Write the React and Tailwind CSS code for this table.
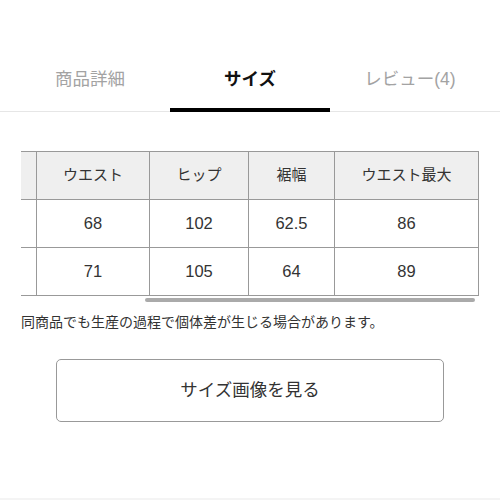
import React from "react";

const font = { fontFamily: '"Liberation Sans", "Noto Sans CJK JP", sans-serif' };

const tabs = ["商品詳細", "サイズ", "レビュー(4)"];
const headers = ["ウエスト", "ヒップ", "裾幅", "ウエスト最大"];
const rows = [
  ["68", "102", "62.5", "86"],
  ["71", "105", "64", "89"],
];
const widths = ["w-[113px]", "w-[99px]", "w-[86px]", "w-[144px]"];

export default function App() {
  const active = 1;

  return (
    <div className="w-[500px] h-[500px] bg-white overflow-hidden text-[#333]" style={font}>
      {/* tabs */}
      <div className="mt-[48px] h-[64px] border-b border-[#e6e6e6] px-[10px] grid grid-cols-3">
        {tabs.map((t, i) => (
          <div key={t} className="relative flex items-center justify-center">
            <span className={`text-[17.5px] ${i === active ? "font-bold text-[#111]" : "text-[#a3a3a3]"}`}>{t}</span>
            {i === active && <div className="absolute left-0 right-0 bottom-[-1px] h-[4px] bg-black" />}
          </div>
        ))}
      </div>

      {/* size table (scrolled horizontally) */}
      <div className="mt-[39px] ml-[21px]">
        <div className="w-[458px] border-t border-r border-[#999]">
          <div className="flex h-[48px] border-b border-[#999] bg-[#efefef]">
            <div className="w-[15px]" />
            {headers.map((h, i) => (
              <div key={h} className={`${widths[i]} border-l border-[#999] flex items-center justify-center text-[15px]`}>
                {h}
              </div>
            ))}
          </div>
          {rows.map((r, ri) => (
            <div key={ri} className="flex h-[48px] border-b border-[#999] bg-white">
              <div className="w-[15px]" />
              {r.map((v, i) => (
                <div key={i} className={`${widths[i]} border-l border-[#999] flex items-center justify-center text-[16.5px]`}>
                  {v}
                </div>
              ))}
            </div>
          ))}
        </div>
        <div className="mt-[2px] ml-[124px] w-[330px] h-[4px] rounded-full bg-[#aaa]" />
      </div>

      <p className="mt-[10px] ml-[21px] text-[14px] leading-[20px] text-[#333]">
        同商品でも生産の過程で個体差が生じる場合があります。
      </p>

      <button className="mt-[27px] mx-auto w-[388px] h-[63px] border border-[#999] rounded-[5px] bg-white flex items-center justify-center text-[17.5px] text-[#333]">
        サイズ画像を見る
      </button>

      <div className="mt-[76px] h-[10px] bg-[#f4f4f4]" />
    </div>
  );
}
